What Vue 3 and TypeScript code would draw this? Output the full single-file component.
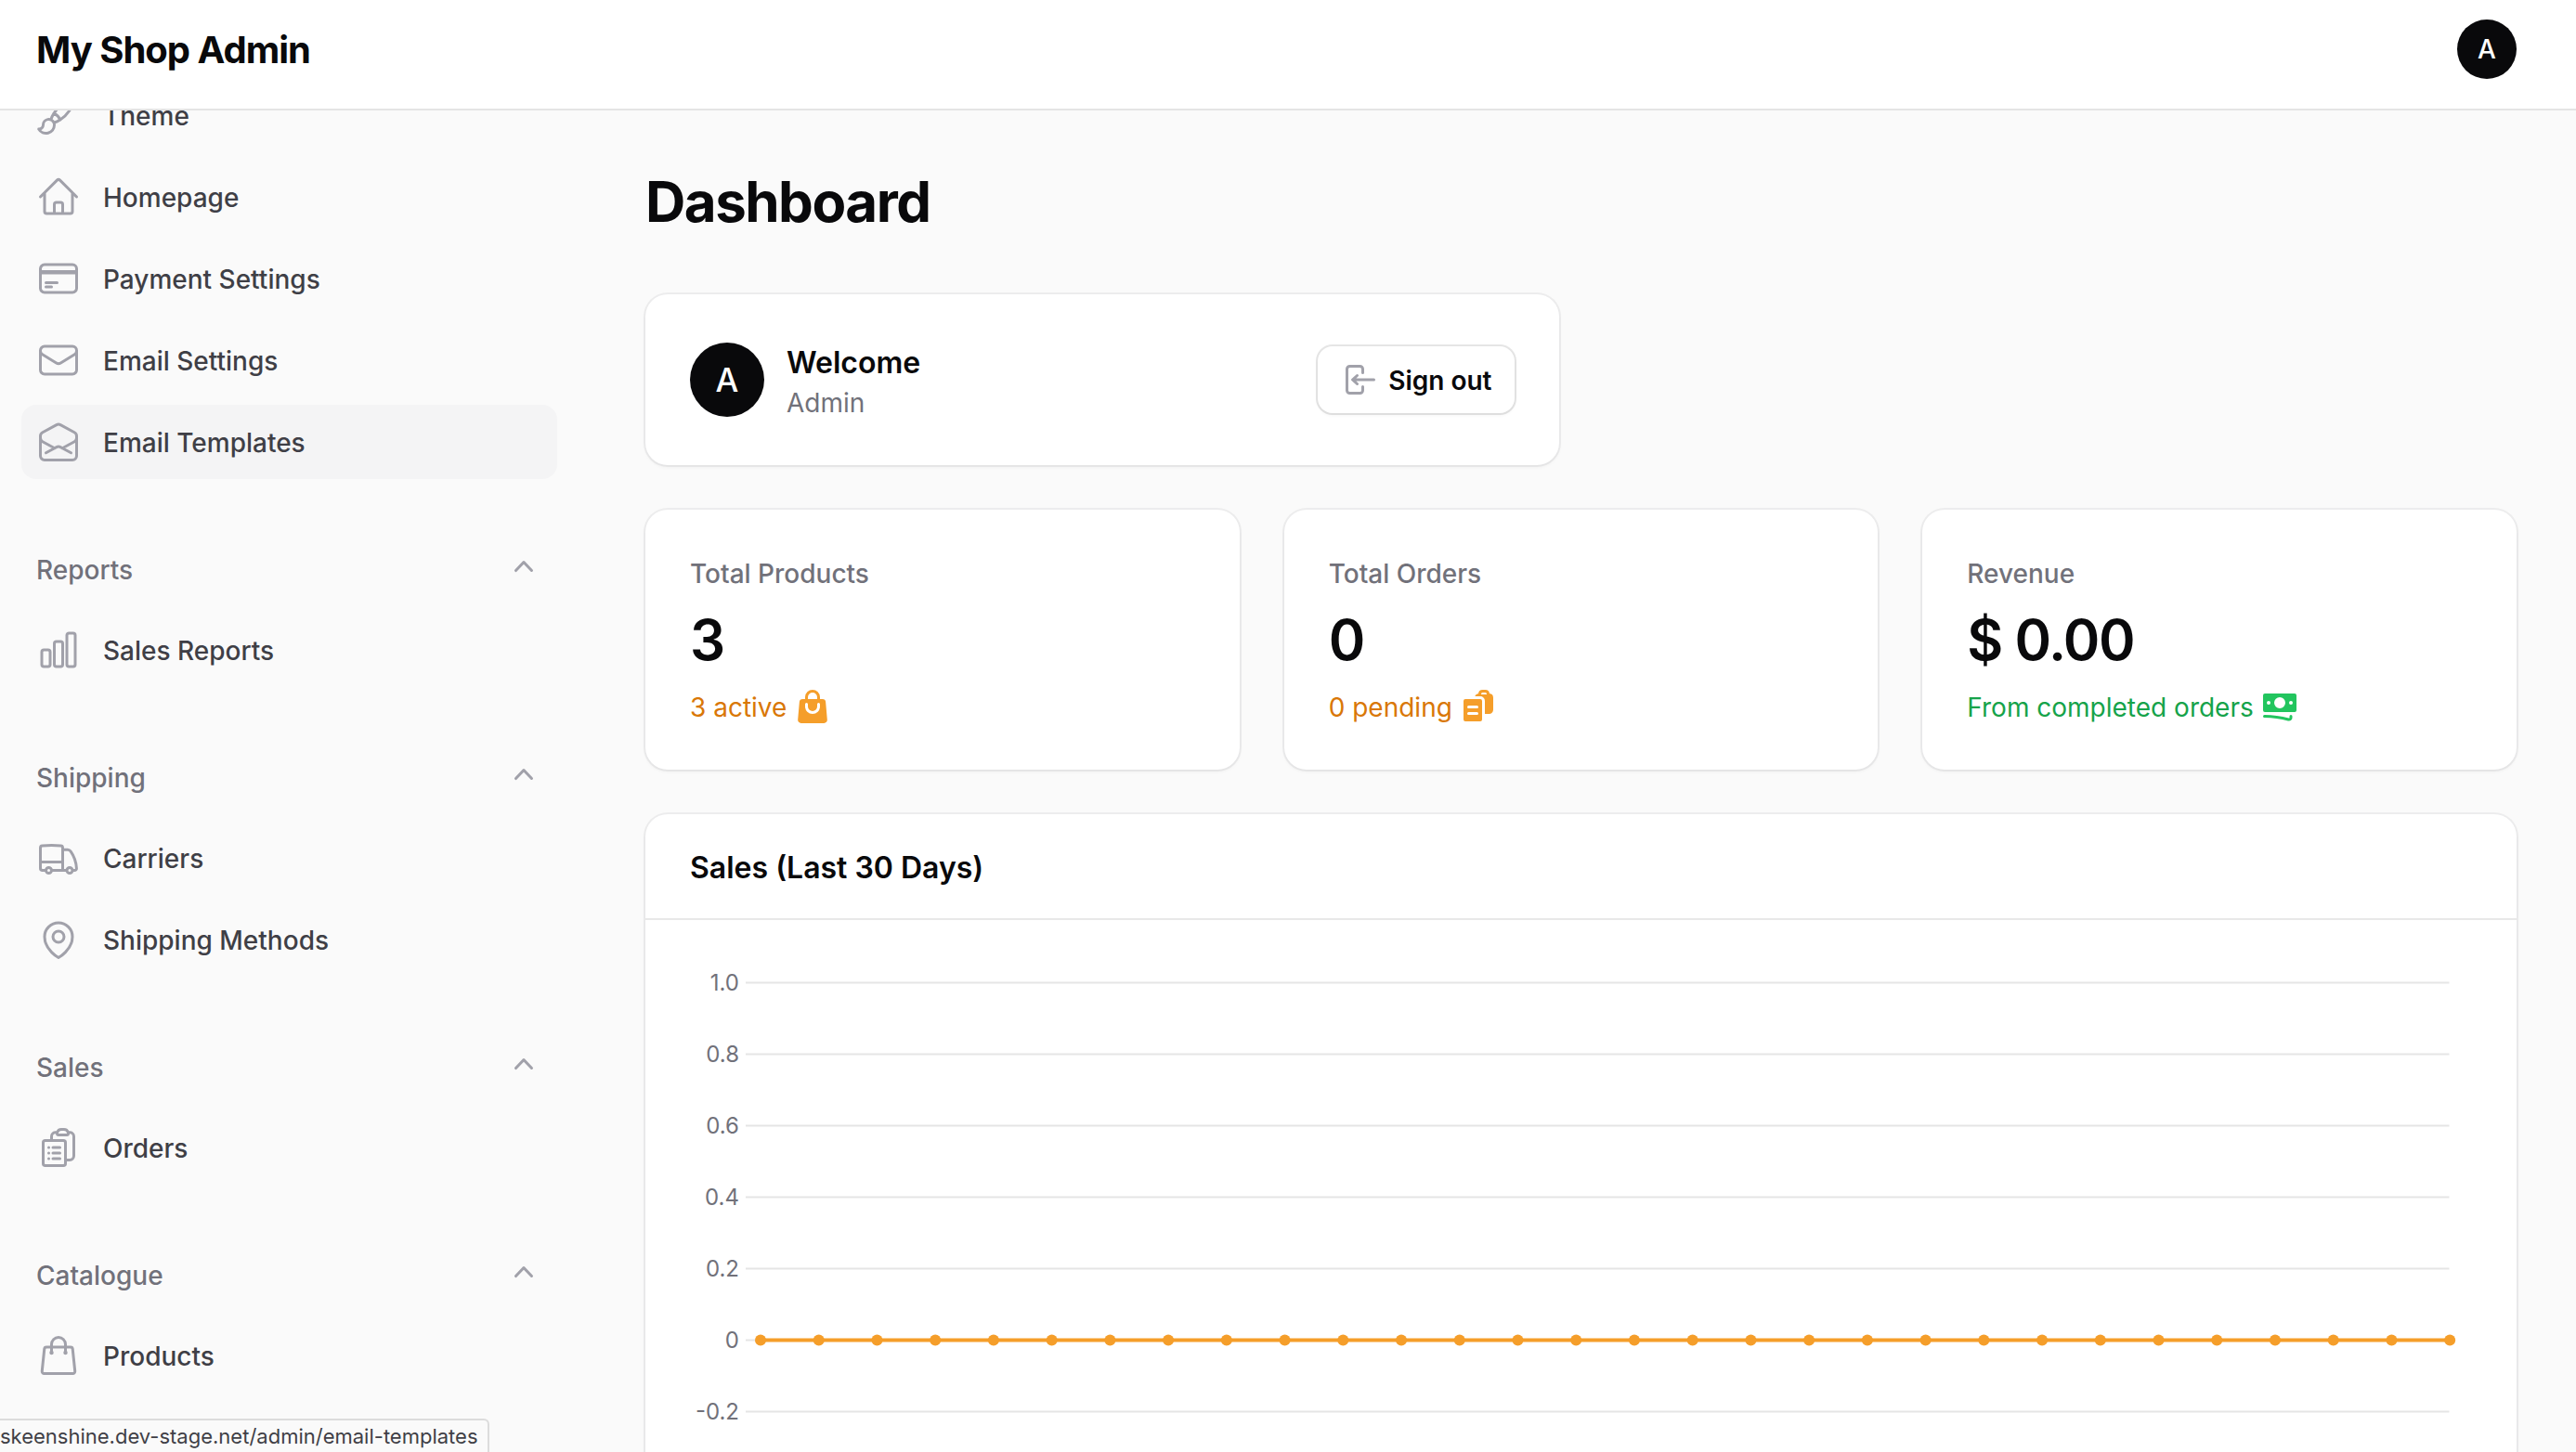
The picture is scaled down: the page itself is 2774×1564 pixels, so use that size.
<template>
  <div class="page">
    <header class="topbar">
      <div class="brand">My Shop Admin</div>
      <div class="avatar avatar-sm">A</div>
    </header>

    <div class="body">
      <aside class="sidebar">
        <nav class="nav">
          <section v-for="group in groups" :key="group.label" class="group">
            <div v-if="group.label" class="group-head">
              <span class="group-label">{{ group.label }}</span>
              <svg class="chevron" viewBox="0 0 20 20" fill="currentColor">
                <path fill-rule="evenodd" clip-rule="evenodd" :d="chevronUp" />
              </svg>
            </div>
            <ul class="rows">
              <li v-for="item in group.items" :key="item.label" class="row" :class="{ active: item.active }">
                <svg class="row-icon" viewBox="0 0 24 24" fill="none" stroke="currentColor" stroke-width="1.5"
                  stroke-linecap="round" stroke-linejoin="round">
                  <path v-for="d in item.icon" :key="d" :d="d" />
                </svg>
                <span class="row-text">{{ item.label }}</span>
              </li>
            </ul>
          </section>
        </nav>
      </aside>

      <main class="main">
        <h1 class="title">Dashboard</h1>

        <div class="welcome-grid">
          <div class="card welcome">
            <div class="avatar avatar-lg">A</div>
            <div class="who">
              <div class="who-name">Welcome</div>
              <div class="who-role">Admin</div>
            </div>
            <button class="sign-out" type="button">
              <svg viewBox="0 0 20 20" fill="currentColor">
                <path fill-rule="evenodd" clip-rule="evenodd" v-for="d in signOutIcon" :key="d" :d="d" />
              </svg>
              <span class="sign-out-text">Sign out</span>
            </button>
          </div>
        </div>

        <div class="stats">
          <div v-for="stat in stats" :key="stat.label" class="card stat">
            <div class="stat-label">{{ stat.label }}</div>
            <div class="stat-value">{{ stat.value }}</div>
            <div class="stat-desc" :class="stat.tone">
              <span class="stat-desc-text">{{ stat.desc }}</span>
              <svg viewBox="0 0 20 20" fill="currentColor">
                <path fill-rule="evenodd" clip-rule="evenodd" v-for="d in stat.icon" :key="d" :d="d" />
              </svg>
            </div>
          </div>
        </div>

        <div class="card chart-card">
          <div class="chart-head"><div class="chart-title">Sales (Last 30 Days)</div></div>
          <svg class="chart" width="2015" height="560" viewBox="0 0 2015 560">
            <g v-for="tick in ticks" :key="tick.label">
              <line class="grid" :x1="gridLeft" :x2="gridRight" :y1="tick.y" :y2="tick.y" />
              <text class="tick" :x="gridLeft - 7" :y="tick.y + 8.5" text-anchor="end">{{ tick.label }}</text>
            </g>
            <line class="series" :x1="points[0]" :x2="points[points.length - 1]" :y1="zeroY" :y2="zeroY" />
            <circle v-for="x in points" :key="x" class="dot" :cx="x" :cy="zeroY" r="6" />
          </svg>
        </div>
      </main>
    </div>

    <div class="status-bubble">skeenshine.dev-stage.net/admin/email-templates</div>
  </div>
</template>

<script setup lang="ts">
interface NavItem {
  label: string
  icon: string[]
  active?: boolean
}

interface NavGroup {
  label: string
  items: NavItem[]
}

// heroicons, outline 24
const icons: Record<string, string[]> = {
  brush: ['M9.53 16.122a3 3 0 0 0-5.78 1.128 2.25 2.25 0 0 1-2.4 2.245 4.5 4.5 0 0 0 8.4-2.245c0-.399-.078-.78-.22-1.128Zm0 0a15.998 15.998 0 0 0 3.388-1.62m-5.043-.025a15.994 15.994 0 0 1 1.622-3.395m3.42 3.42a15.995 15.995 0 0 0 4.764-4.648l3.876-5.814a1.151 1.151 0 0 0-1.597-1.597L14.146 6.32a15.996 15.996 0 0 0-4.649 4.763m3.42 3.42a6.776 6.776 0 0 0-3.42-3.42'],
  home: ['m2.25 12 8.954-8.955c.44-.439 1.152-.439 1.591 0L21.75 12M4.5 9.75v10.125c0 .621.504 1.125 1.125 1.125H9.75v-4.875c0-.621.504-1.125 1.125-1.125h2.25c.621 0 1.125.504 1.125 1.125V21h4.125c.621 0 1.125-.504 1.125-1.125V9.75M8.25 21h8.25'],
  card: ['M2.25 8.25h19.5M2.25 9h19.5m-16.5 5.25h6m-6 2.25h3m-3.75 3h15a2.25 2.25 0 0 0 2.25-2.25V6.75A2.25 2.25 0 0 0 19.5 4.5h-15a2.25 2.25 0 0 0-2.25 2.25v10.5A2.25 2.25 0 0 0 4.5 19.5Z'],
  envelope: ['M21.75 6.75v10.5a2.25 2.25 0 0 1-2.25 2.25h-15a2.25 2.25 0 0 1-2.25-2.25V6.75m19.5 0A2.25 2.25 0 0 0 19.5 4.5h-15a2.25 2.25 0 0 0-2.25 2.25m19.5 0v.243a2.25 2.25 0 0 1-1.07 1.916l-7.5 4.615a2.25 2.25 0 0 1-2.36 0L3.32 8.91a2.25 2.25 0 0 1-1.07-1.916V6.75'],
  envelopeOpen: ['M21.75 9v.906a2.25 2.25 0 0 1-1.183 1.981l-6.478 3.488M2.25 9v.906a2.25 2.25 0 0 0 1.183 1.981l6.478 3.488m8.839 2.51-4.66-2.51m0 0-1.023-.55a2.25 2.25 0 0 0-2.134 0l-1.022.55m0 0-4.661 2.51m16.5 1.615a2.25 2.25 0 0 1-2.25 2.25h-15a2.25 2.25 0 0 1-2.25-2.25V8.844a2.25 2.25 0 0 1 1.183-1.981l7.5-4.039a2.25 2.25 0 0 1 2.134 0l7.5 4.039a2.25 2.25 0 0 1 1.183 1.98V19.5Z'],
  chart: ['M3 13.125C3 12.504 3.504 12 4.125 12h2.25c.621 0 1.125.504 1.125 1.125v6.75C7.5 20.496 6.996 21 6.375 21h-2.25A1.125 1.125 0 0 1 3 19.875v-6.75ZM9.75 8.625c0-.621.504-1.125 1.125-1.125h2.25c.621 0 1.125.504 1.125 1.125v11.25c0 .621-.504 1.125-1.125 1.125h-2.25a1.125 1.125 0 0 1-1.125-1.125V8.625ZM16.5 4.125c0-.621.504-1.125 1.125-1.125h2.25C20.496 3 21 3.504 21 4.125v15.75c0 .621-.504 1.125-1.125 1.125h-2.25a1.125 1.125 0 0 1-1.125-1.125V4.125Z'],
  truck: ['M8.25 18.75a1.5 1.5 0 0 1-3 0m3 0a1.5 1.5 0 0 0-3 0m3 0h6m-9 0H3.375a1.125 1.125 0 0 1-1.125-1.125V14.25m17.25 4.5a1.5 1.5 0 0 1-3 0m3 0a1.5 1.5 0 0 0-3 0m3 0h1.125c.621 0 1.129-.504 1.09-1.124a17.902 17.902 0 0 0-3.213-9.193 2.056 2.056 0 0 0-1.58-.86H14.25M16.5 18.75h-2.25m0-11.177v-.958c0-.568-.422-1.048-.987-1.106a48.554 48.554 0 0 0-10.026 0 1.106 1.106 0 0 0-.987 1.106v7.635m12-6.677v6.677m0 4.5v-4.5m0 0h-12'],
  pin: ['M15 10.5a3 3 0 1 1-6 0 3 3 0 0 1 6 0Z', 'M19.5 10.5c0 7.142-7.5 11.25-7.5 11.25S4.5 17.642 4.5 10.5a7.5 7.5 0 1 1 15 0Z'],
  orders: ['M9 12h3.75M9 15h3.75M9 18h3.75m3 .75H18a2.25 2.25 0 0 0 2.25-2.25V6.108c0-1.135-.845-2.098-1.976-2.192a48.424 48.424 0 0 0-1.123-.08m-5.801 0c-.065.21-.1.433-.1.664 0 .414.336.75.75.75h4.5a.75.75 0 0 0 .75-.75 2.25 2.25 0 0 0-.1-.664m-5.8 0A2.251 2.251 0 0 1 13.5 2.25H15c1.012 0 1.867.668 2.15 1.586m-5.8 0c-.376.023-.75.05-1.124.08C9.095 4.01 8.25 4.973 8.25 6.108V8.25m0 0H4.875c-.621 0-1.125.504-1.125 1.125v11.25c0 .621.504 1.125 1.125 1.125h9.75c.621 0 1.125-.504 1.125-1.125V9.375c0-.621-.504-1.125-1.125-1.125H8.25ZM6.75 12h.008v.008H6.75V12Zm0 3h.008v.008H6.75V15Zm0 3h.008v.008H6.75V18Z'],
  bag: ['M15.75 10.5V6a3.75 3.75 0 1 0-7.5 0v4.5m11.356-1.993 1.263 12c.07.665-.45 1.243-1.119 1.243H4.25a1.125 1.125 0 0 1-1.12-1.243l1.264-12A1.125 1.125 0 0 1 5.513 7.5h12.974c.576 0 1.059.435 1.119 1.007ZM8.625 10.5a.375.375 0 1 1-.75 0 .375.375 0 0 1 .75 0Zm7.5 0a.375.375 0 1 1-.75 0 .375.375 0 0 1 .75 0Z'],
}

// heroicons, solid 20
const chevronUp = 'M14.77 12.79a.75.75 0 0 1-1.06-.02L10 8.832 6.29 12.77a.75.75 0 1 1-1.08-1.04l4.25-4.5a.75.75 0 0 1 1.08 0l4.25 4.5a.75.75 0 0 1-.02 1.06Z'
const signOutIcon = [
  'M3 4.25A2.25 2.25 0 0 1 5.25 2h5.5A2.25 2.25 0 0 1 13 4.25v2a.75.75 0 0 1-1.5 0v-2a.75.75 0 0 0-.75-.75h-5.5a.75.75 0 0 0-.75.75v11.5c0 .414.336.75.75.75h5.5a.75.75 0 0 0 .75-.75v-2a.75.75 0 0 1 1.5 0v2A2.25 2.25 0 0 1 10.75 18h-5.5A2.25 2.25 0 0 1 3 15.75V4.25Z',
  'M19 10a.75.75 0 0 0-.75-.75H8.704l1.048-.943a.75.75 0 1 0-1.004-1.114l-2.5 2.25a.75.75 0 0 0 0 1.114l2.5 2.25a.75.75 0 1 0 1.004-1.114l-1.048-.943h9.546A.75.75 0 0 0 19 10Z',
]
const solidBag = ['M6 5v1H4.667a1.75 1.75 0 0 0-1.743 1.598l-.826 9.5A1.75 1.75 0 0 0 3.84 19H16.16a1.75 1.75 0 0 0 1.743-1.902l-.826-9.5A1.75 1.75 0 0 0 15.333 6H14V5a4 4 0 0 0-8 0Zm4-2.5A2.5 2.5 0 0 0 7.5 5v1h5V5A2.5 2.5 0 0 0 10 2.5ZM7.5 10a2.5 2.5 0 0 0 5 0V8.75a.75.75 0 0 1 1.5 0V10a4 4 0 0 1-8 0V8.75a.75.75 0 0 1 1.5 0V10Z']
const solidClipboard = [
  'M15.988 3.012A2.25 2.25 0 0 1 18 5.25v6.5A2.25 2.25 0 0 1 15.75 14H13.5V7A2.5 2.5 0 0 0 11 4.5H8.128a2.252 2.252 0 0 1 1.884-1.488A2.25 2.25 0 0 1 12.25 1h1.5a2.25 2.25 0 0 1 2.238 2.012ZM11.5 3.25a.75.75 0 0 1 .75-.75h1.5a.75.75 0 0 1 .75.75v.25h-3v-.25Z',
  'M2 7a1 1 0 0 1 1-1h8a1 1 0 0 1 1 1v10a1 1 0 0 1-1 1H3a1 1 0 0 1-1-1V7Zm2 3.25a.75.75 0 0 1 .75-.75h4.5a.75.75 0 0 1 0 1.5h-4.5a.75.75 0 0 1-.75-.75Zm0 3.5a.75.75 0 0 1 .75-.75h4.5a.75.75 0 0 1 0 1.5h-4.5a.75.75 0 0 1-.75-.75Z',
]
const solidNotes = ['M1 4a1 1 0 0 1 1-1h16a1 1 0 0 1 1 1v8a1 1 0 0 1-1 1H2a1 1 0 0 1-1-1V4Zm12 4a3 3 0 1 1-6 0 3 3 0 0 1 6 0ZM4 9a1 1 0 1 0 0-2 1 1 0 0 0 0 2Zm13-1a1 1 0 1 1-2 0 1 1 0 0 1 2 0ZM1.75 14.5a.75.75 0 0 0 0 1.5c4.417 0 8.693.603 12.749 1.73 1.111.309 2.251-.512 2.251-1.696v-.784a.75.75 0 0 0-1.5 0v.784a.272.272 0 0 1-.35.25A49.043 49.043 0 0 0 1.75 14.5Z']

const groups: NavGroup[] = [
  {
    label: '',
    items: [
      { label: 'Theme', icon: icons.brush },
      { label: 'Homepage', icon: icons.home },
      { label: 'Payment Settings', icon: icons.card },
      { label: 'Email Settings', icon: icons.envelope },
      { label: 'Email Templates', icon: icons.envelopeOpen, active: true },
    ],
  },
  { label: 'Reports', items: [{ label: 'Sales Reports', icon: icons.chart }] },
  {
    label: 'Shipping',
    items: [
      { label: 'Carriers', icon: icons.truck },
      { label: 'Shipping Methods', icon: icons.pin },
    ],
  },
  { label: 'Sales', items: [{ label: 'Orders', icon: icons.orders }] },
  { label: 'Catalogue', items: [{ label: 'Products', icon: icons.bag }] },
]

const stats = [
  { label: 'Total Products', value: '3', desc: '3 active', tone: 'warn', icon: solidBag },
  { label: 'Total Orders', value: '0', desc: '0 pending', tone: 'warn', icon: solidClipboard },
  { label: 'Revenue', value: '$ 0.00', desc: 'From completed orders', tone: 'good', icon: solidNotes },
]

// chart coordinates are relative to the chart svg
const gridLeft = 108
const gridRight = 1942.5
const firstPoint = 124
const pointGap = 62.73
const tickGap = 77
const firstTickY = 67.5

const tickLabels = ['1.0', '0.8', '0.6', '0.4', '0.2', '0', '-0.2']
const ticks = tickLabels.map((label, i) => ({ label, y: firstTickY + i * tickGap }))
const zeroY = firstTickY + 5 * tickGap
const points = Array.from({ length: 30 }, (_, i) => firstPoint + i * pointGap)
</script>

<style scoped>
.page {
  position: relative;
  width: 2774px;
  height: 1564px;
  overflow: hidden;
  background: #fafafa;
  color: #09090b;
  font-family: Inter, "Liberation Sans", sans-serif;
}

.topbar {
  position: relative;
  z-index: 2;
  display: flex;
  justify-content: space-between;
  align-items: flex-start;
  box-sizing: border-box;
  height: 119px;
  padding: 21px 64px 0 39px;
  background: #fff;
  border-bottom: 2px solid #e4e4e4;
}

.brand {
  margin-top: 13px;
  font-size: 40px;
  line-height: 40px;
  font-weight: 700;
  letter-spacing: -0.025em;
}

.avatar {
  display: flex;
  align-items: center;
  justify-content: center;
  flex: none;
  border-radius: 50%;
  background: #09090b;
  color: #fff;
  font-weight: 500;
}

.avatar-sm {
  width: 64px;
  height: 64px;
  font-size: 28px;
}

.avatar-lg {
  width: 80px;
  height: 80px;
  font-size: 35px;
}

.body {
  display: flex;
  height: 1445px;
}

.sidebar {
  flex: none;
  box-sizing: border-box;
  width: 640px;
  padding: 0 40px 0 23px;
  overflow: hidden;
}

.nav {
  display: flex;
  flex-direction: column;
  gap: 72px;
  margin-top: -35px;
}

.group-head {
  display: flex;
  align-items: center;
  justify-content: space-between;
  height: 48px;
  margin-bottom: 24px;
  padding: 0 17px 0 16px;
}

.group-label {
  margin-top: 3px;
  font-size: 28px;
  line-height: 40px;
  font-weight: 500;
  color: #71717a;
}

.chevron {
  width: 40px;
  height: 40px;
  margin-top: -4px;
  margin-right: -1px;
  color: #a1a1aa;
}

.rows {
  display: flex;
  flex-direction: column;
  gap: 8px;
  margin: 0;
  padding: 0;
  list-style: none;
}

.row {
  display: flex;
  align-items: center;
  gap: 24px;
  height: 80px;
  padding: 0 16px;
  border-radius: 16px;
  font-size: 28px;
  line-height: 40px;
  font-weight: 500;
  color: #3f3f46;
}

.row.active {
  background: #f4f4f5;
}

.row-text {
  margin-top: 2px;
}

.row-icon {
  flex: none;
  width: 48px;
  height: 48px;
  color: #a1a1aa;
}

.main {
  flex: 1;
  min-width: 0;
  display: flex;
  flex-direction: column;
  gap: 48px;
  padding: 62px 64px 0 55px;
  overflow: hidden;
}

.title {
  margin: 0 0 16px;
  font-size: 60px;
  line-height: 72px;
  font-weight: 700;
  letter-spacing: -0.025em;
}

.card {
  background: #fff;
  border-radius: 24px;
  box-shadow: 0 0 0 2px rgba(9, 9, 11, 0.05), 0 2px 4px rgba(0, 0, 0, 0.05);
}

.welcome-grid {
  display: grid;
  grid-template-columns: repeat(2, 1fr);
  gap: 48px;
}

.welcome {
  display: flex;
  align-items: center;
  gap: 24px;
  padding: 48px;
}

.who {
  flex: 1;
}

.who-name {
  height: 48px;
  font-size: 32px;
  line-height: 51px;
  font-weight: 600;
}

.who-role {
  height: 40px;
  font-size: 28px;
  line-height: 43px;
  color: #71717a;
}

.sign-out {
  display: flex;
  align-items: center;
  gap: 12px;
  height: 72px;
  padding: 0 24px;
  border: 0;
  border-radius: 16px;
  background: #fff;
  box-shadow: 0 0 0 2px rgba(9, 9, 11, 0.1), 0 2px 4px rgba(0, 0, 0, 0.05);
  color: #09090b;
  font-family: inherit;
  font-size: 28px;
  line-height: 40px;
  font-weight: 600;
}

.sign-out svg {
  width: 40px;
  height: 40px;
  color: #a1a1aa;
}

.sign-out-text {
  margin-top: 2px;
}

.stats {
  display: grid;
  grid-template-columns: repeat(3, 1fr);
  gap: 48px;
}

.stat {
  display: flex;
  flex-direction: column;
  gap: 16px;
  padding: 48px;
}

.stat-label {
  height: 40px;
  font-size: 28px;
  line-height: 43px;
  font-weight: 500;
  color: #71717a;
}

.stat-value {
  font-size: 60px;
  line-height: 72px;
  font-weight: 600;
  letter-spacing: -0.025em;
}

.stat-desc {
  display: flex;
  align-items: center;
  gap: 8px;
  height: 40px;
  font-size: 28px;
  line-height: 40px;
  font-weight: 400;
}

.stat-desc-text {
  margin-top: 1px;
}

.stat-desc svg {
  width: 40px;
  height: 40px;
}

.stat-desc.warn {
  color: #d97706;
}

.stat-desc.warn svg {
  color: #f59e2a;
}

.stat-desc.good {
  color: #16a34a;
}

.stat-desc.good svg {
  color: #22c55e;
}

.chart-card {
  flex: none;
  height: 900px;
}

.chart-head {
  padding: 32px 48px;
  border-bottom: 2px solid #e8e8e8;
}

.chart-title {
  height: 48px;
  font-size: 32px;
  line-height: 51px;
  font-weight: 600;
}

.chart {
  display: block;
}

.grid {
  stroke: #e5e5e5;
  stroke-width: 2;
}

.tick {
  fill: #71717a;
  font-family: Inter, "Liberation Sans", sans-serif;
  font-size: 24px;
}

.series {
  stroke: #f59e2a;
  stroke-width: 4;
}

.dot {
  fill: #f59e2a;
}

.status-bubble {
  position: absolute;
  left: 0;
  bottom: 0;
  z-index: 3;
  box-sizing: border-box;
  height: 36px;
  padding: 0 10px 0 0;
  background: #fafafa;
  border-top: 2px solid #dcdcdc;
  border-right: 2px solid #dcdcdc;
  border-top-right-radius: 6px;
  font-size: 22px;
  line-height: 34px;
  color: #3f3f46;
  white-space: nowrap;
}
</style>

<style>
html,
body {
  margin: 0;
  background: #fafafa;
}
</style>
